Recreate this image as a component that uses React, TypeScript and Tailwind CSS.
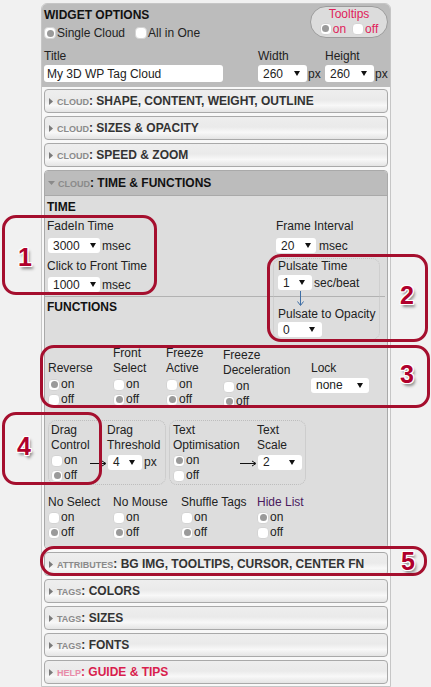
import React from "react";

type RadioProps = { on?: boolean; label: string; className?: string };

const Radio = ({ on, label, className = "" }: RadioProps) => (
  <div className={`flex h-[15px] items-center ${className}`}>
    <span className="flex h-[12px] w-[12px] items-center justify-center rounded-[4px] border border-[#d4d4d4] bg-white">
      {on && <span className="h-[7px] w-[7px] rounded-full bg-[#9a9a9a]" />}
    </span>
    <span className="ml-[1px]">{label}</span>
  </div>
);

const DownTri = () => (
  <svg width="6" height="5" viewBox="0 0 6 5">
    <path d="M0 0h6L3 5z" fill="#111" />
  </svg>
);

const Select = ({
  value,
  className,
  pr = "pr-[6px]",
}: {
  value: string;
  className: string;
  pr?: string;
}) => (
  <span
    className={`flex items-center justify-between rounded-[3px] bg-white pl-[5px] ${pr} text-[#222] ${className}`}
  >
    <span>{value}</span>
    <DownTri />
  </span>
);

const RightArrow = () => (
  <svg width="17" height="15" viewBox="0 0 17 15" className="shrink-0">
    <path d="M0 8.5h15" stroke="#111" strokeWidth="1" />
    <path d="M12 6l4 2.5-4 2.5" fill="none" stroke="#111" strokeWidth="1" />
  </svg>
);

const Section = ({
  pre,
  title,
  help,
}: {
  pre: string;
  title: string;
  help?: boolean;
}) => (
  <div className="flex h-[24px] items-center rounded-[4px] border border-[#a9a9a9] bg-[linear-gradient(to_bottom,#eeeeee_0%,#eaeaea_45%,#f8f8f8_70%,#e4e4e4_100%)] pl-[4px]">
    <svg width="4" height="7" viewBox="0 0 4 7">
      <path d="M0 0l4 3.5L0 7z" fill="#7a7a7a" />
    </svg>
    <span className="ml-[4px] flex items-baseline">
      <span
        className={`text-[9px] font-bold ${help ? "text-[#e88aa8]" : "text-[#8a8a8a]"}`}
      >
        {pre}
      </span>
      <span
        className={`text-[12px] font-bold ${help ? "text-[#d91e4e]" : "text-[#333]"}`}
      >
        : {title}
      </span>
    </span>
  </div>
);

const Fn = ({
  lines,
  on,
  className = "",
}: {
  lines: string[];
  on: boolean;
  className?: string;
}) => (
  <div className={className}>
    <div className="flex h-[30px] flex-col justify-end">
      {lines.map((l) => (
        <div key={l}>{l}</div>
      ))}
    </div>
    <div className="mt-[1px]">
      <Radio on={on} label="on" />
      <Radio on={!on} label="off" />
    </div>
  </div>
);

const Mark = ({ className }: { className: string }) => (
  <div
    className={`pointer-events-none absolute rounded-[14px] border-[3px] border-[#a50f2e] ${className}`}
  />
);

const Num = ({ n, className }: { n: string; className: string }) => (
  <div
    className={`pointer-events-none absolute flex w-[30px] justify-center text-[25px] font-bold leading-[25px] text-[#b0002c] [text-shadow:1px_1px_0_#fff,-1px_-1px_0_#fff,1px_-1px_0_#fff,-1px_1px_0_#fff,0_1px_0_#fff,1px_0_0_#fff,2px_3px_3px_rgba(0,0,0,0.45)] ${className}`}
  >
    {n}
  </div>
);

export default function App() {
  return (
    <div className="relative h-[687px] w-[431px] overflow-hidden bg-[#f1f1f1] font-['Liberation_Sans',Arial,sans-serif] text-[12px] leading-[14px] text-[#222]">
      <div className="ml-[41px] mt-[3px] w-[350px] rounded-t-[6px] border border-[#c6c6c6] bg-[#f8f8f8] pb-[2px]">
        {/* widget options */}
        <div className="rounded-t-[5px] bg-[#bcbcbc] px-[2px] pb-[5px] pt-[2px]">
          <div className="flex justify-between">
            <div className="pt-[2px]">
              <div className="font-bold text-[#111]">WIDGET OPTIONS</div>
              <div className="mt-[4px] flex h-[14px] items-center">
                <Radio on label="Single Cloud" />
                <Radio label="All in One" className="ml-[10px]" />
              </div>
            </div>
            <div className="flex h-[32px] w-[78px] flex-col items-center rounded-full border border-[#9c9c9c] bg-[#dcdcdc] text-[#e0215a]">
              <div>Tooltips</div>
              <div className="flex">
                <Radio on label="on" />
                <Radio label="off" className="ml-[6px]" />
              </div>
            </div>
          </div>
          <div className="mt-[9px] flex">
            <div className="w-[179px]">
              <div>Title</div>
              <div className="mt-[2px] flex h-[17px] items-center rounded-[3px] bg-white px-[3px]">
                My 3D WP Tag Cloud
              </div>
            </div>
            <div className="ml-[35px] w-[67px]">
              <div>Width</div>
              <div className="mt-[2px] flex items-center">
                <Select value="260" className="h-[17px] w-[49px]" pr="pr-[7px]" />
                <span className="ml-[1px]">px</span>
              </div>
            </div>
            <div>
              <div>Height</div>
              <div className="mt-[2px] flex items-center">
                <Select value="260" className="h-[17px] w-[49px]" pr="pr-[7px]" />
                <span className="ml-[1px]">px</span>
              </div>
            </div>
          </div>
        </div>

        {/* accordion */}
        <div className="flex flex-col gap-[3px] px-[2px] pt-[2px]">
          <Section pre="CLOUD" title="SHAPE, CONTENT, WEIGHT, OUTLINE" />
          <Section pre="CLOUD" title="SIZES & OPACITY" />
          <Section pre="CLOUD" title="SPEED & ZOOM" />

          <div className="rounded-[4px] border border-[#a9a9a9]">
            <div className="flex h-[25px] items-center rounded-t-[3px] border-b border-[#a9a9a9] bg-[#bcbcbc] pl-[3px]">
              <svg width="7" height="4" viewBox="0 0 7 4">
                <path d="M0 0h7L3.5 4z" fill="#8a8a8a" />
              </svg>
              <span className="ml-[3px] flex items-baseline">
                <span className="text-[9px] font-bold text-[#8a8a8a]">CLOUD</span>
                <span className="text-[12px] font-bold text-[#111]">: TIME &amp; FUNCTIONS</span>
              </span>
            </div>

            <div className="rounded-b-[3px] bg-[#dddddd] pb-[8px] pl-[2px] pt-[4px]">
              {/* time */}
              <div className="grid grid-cols-[226px_1fr] grid-rows-[19px_38px_39px_1px_44px]">
                <div className="col-start-1 row-start-1 font-bold text-[#111]">TIME</div>
                <div className="col-start-1 row-start-2">
                  <div>FadeIn Time</div>
                  <div className="ml-[1px] mt-[5px] flex items-center">
                    <Select value="3000" className="h-[15px] w-[52px]" pr="pr-[4px]" />
                    <span className="ml-[2px]">msec</span>
                  </div>
                </div>
                <div className="col-start-2 row-start-2 pl-[3px]">
                  <div>Frame Interval</div>
                  <div className="mt-[5px] flex items-center">
                    <Select value="20" className="h-[15px] w-[40px]" pr="pr-[5px]" />
                    <span className="ml-[3px]">msec</span>
                  </div>
                </div>
                <div className="col-start-1 row-start-3 pt-[2px]">
                  <div>Click to Front Time</div>
                  <div className="ml-[1px] mt-[4px] flex items-center">
                    <Select value="1000" className="h-[15px] w-[52px]" pr="pr-[4px]" />
                    <span className="ml-[2px]">msec</span>
                  </div>
                </div>
                <div className="col-span-2 col-start-1 row-start-4 -ml-[2px] mr-[2px] bg-[#b2b2b2]" />
                <div className="col-start-1 row-start-5 pt-[3px] font-bold text-[#111]">FUNCTIONS</div>
                <div className="col-start-2 row-span-3 row-start-3 my-[1px] w-[107px] rounded-[8px] border border-dotted border-[#c2c2c2] pl-[4px]">
                  <div>Pulsate Time</div>
                  <div className="mt-[2px] flex items-center">
                    <Select value="1" className="h-[15px] w-[34px]" pr="pr-[7px]" />
                    <span className="ml-[2px]">sec/beat</span>
                  </div>
                  <svg width="9" height="17" viewBox="0 0 9 17" className="ml-[18px]">
                    <path d="M4.5 1v14" stroke="#3f6fa6" strokeWidth="1" />
                    <path d="M1.5 11.5l3 4 3-4" fill="none" stroke="#3f6fa6" strokeWidth="1" />
                  </svg>
                  <div>Pulsate to Opacity</div>
                  <div className="mt-[1px] flex">
                    <Select value="0" className="h-[15px] w-[44px]" pr="pr-[7px]" />
                  </div>
                </div>
              </div>

              {/* functions */}
              <div className="ml-[1px] mt-[5px] flex leading-[15px]">
                <Fn lines={["Reverse"]} on className="w-[65px]" />
                <Fn lines={["Front", "Select"]} on={false} className="w-[53px]" />
                <Fn lines={["Freeze", "Active"]} on={false} className="w-[57px]" />
                <Fn lines={["Freeze", "Deceleration"]} on={false} className="w-[88px] pt-[2px]" />
                <div>
                  <div className="flex h-[30px] flex-col justify-end">
                    <div>Lock</div>
                  </div>
                  <div className="mt-[2px] flex">
                    <Select value="none" className="h-[15px] w-[58px]" />
                  </div>
                </div>
              </div>

              {/* drag */}
              <div className="ml-[1px] mt-[11px] flex gap-[3px] leading-[15px]">
                <div className="flex h-[65px] w-[118px] rounded-[8px] border border-dotted border-[#bdbdbd] pl-[2px] pt-[2px]">
                  <div className="w-[39px]">
                    <div>Drag</div>
                    <div>Control</div>
                    <Radio label="on" />
                    <Radio on label="off" />
                  </div>
                  <div>
                    <div className="pl-[17px]">Drag</div>
                    <div className="pl-[17px]">Threshold</div>
                    <div className="mt-[2px] flex items-center">
                      <RightArrow />
                      <Select value="4" className="ml-[1px] h-[15px] w-[34px]" pr="pr-[7px]" />
                      <span className="ml-[2px]">px</span>
                    </div>
                  </div>
                </div>
                <div className="flex h-[65px] w-[137px] rounded-[8px] border border-dotted border-[#bdbdbd] pl-[3px] pt-[2px]">
                  <div className="w-[67px]">
                    <div>Text</div>
                    <div>Optimisation</div>
                    <Radio on label="on" />
                    <Radio label="off" />
                  </div>
                  <div>
                    <div className="pl-[17px]">Text</div>
                    <div className="pl-[17px]">Scale</div>
                    <div className="mt-[2px] flex items-center">
                      <RightArrow />
                      <Select value="2" className="ml-[1px] h-[15px] w-[44px]" pr="pr-[7px]" />
                    </div>
                  </div>
                </div>
              </div>

              {/* selection */}
              <div className="ml-[1px] mt-[10px] flex leading-[15px]">
                <div className="w-[65px]">
                  <div>No Select</div>
                  <Radio label="on" />
                  <Radio on label="off" />
                </div>
                <div className="w-[68px]">
                  <div>No Mouse</div>
                  <Radio label="on" />
                  <Radio on label="off" />
                </div>
                <div className="w-[76px]">
                  <div>Shuffle Tags</div>
                  <Radio label="on" />
                  <Radio on label="off" />
                </div>
                <div>
                  <div className="text-[#4a1a5e]">Hide List</div>
                  <Radio on label="on" />
                  <Radio label="off" />
                </div>
              </div>
            </div>
          </div>

          <Section pre="ATTRIBUTES" title="BG IMG, TOOLTIPS, CURSOR, CENTER FN" />
          <Section pre="TAGS" title="COLORS" />
          <Section pre="TAGS" title="SIZES" />
          <Section pre="TAGS" title="FONTS" />
          <Section pre="HELP" title="GUIDE & TIPS" help />
        </div>
      </div>

      {/* annotations */}
      <Mark className="left-[2px] top-[215px] h-[80px] w-[155px]" />
      <Num n="1" className="left-[10px] top-[245px]" />
      <Mark className="left-[267px] top-[254px] h-[88px] w-[161px]" />
      <Num n="2" className="left-[392px] top-[283px]" />
      <Mark className="left-[40px] top-[345px] h-[63px] w-[390px]" />
      <Num n="3" className="left-[392px] top-[362px]" />
      <Mark className="left-[2px] top-[412px] h-[73px] w-[100px]" />
      <Num n="4" className="left-[9px] top-[434px]" />
      <Mark className="left-[40px] top-[546px] h-[30px] w-[387px] rounded-[10px]" />
      <Num n="5" className="left-[393px] top-[549px]" />
    </div>
  );
}
